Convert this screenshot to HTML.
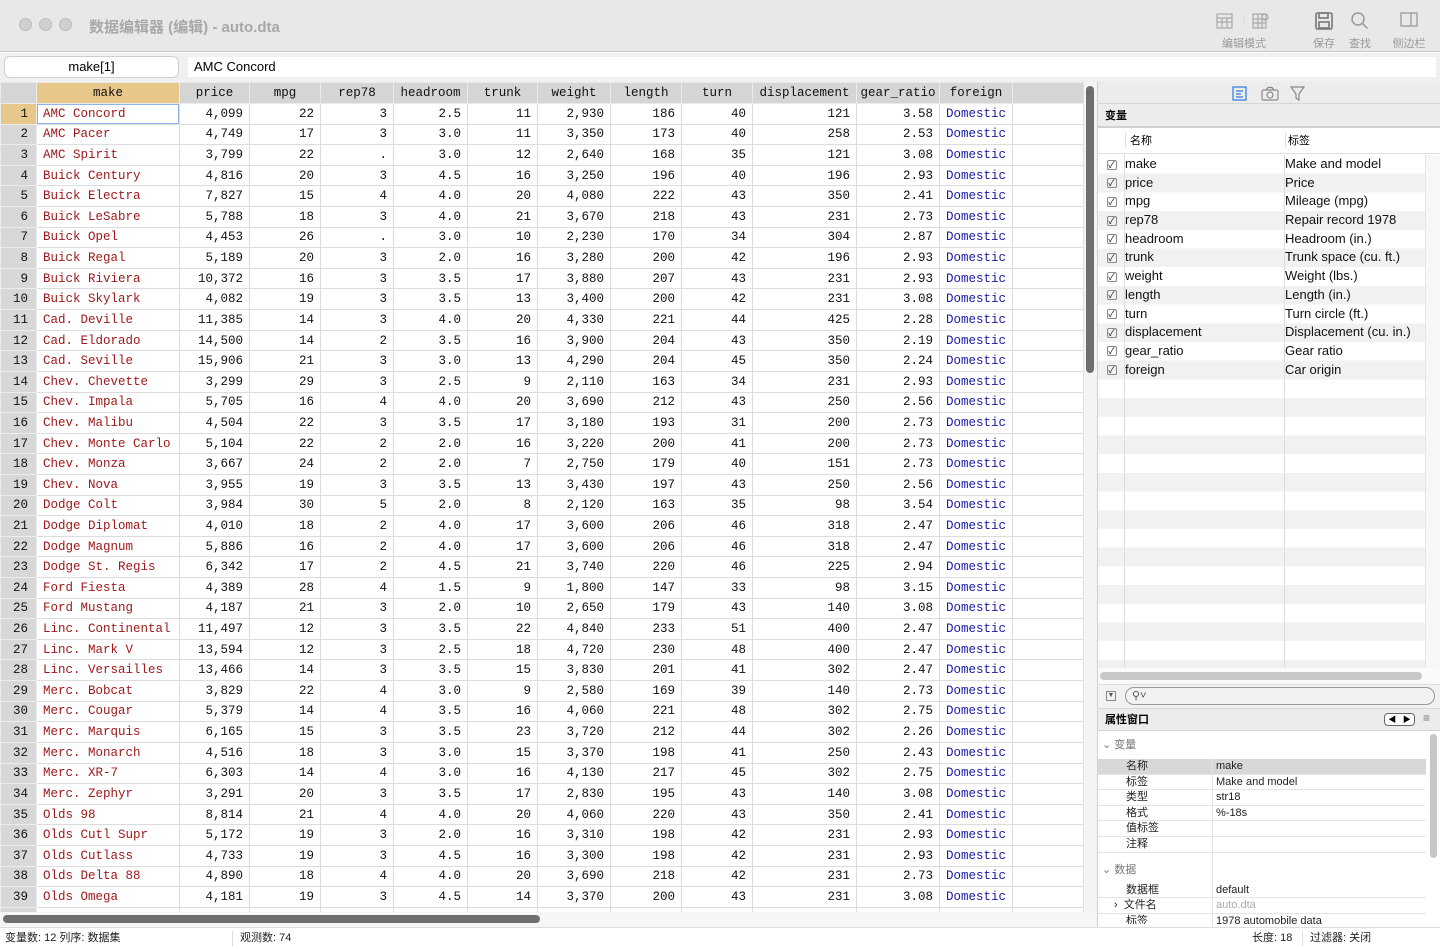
<!DOCTYPE html>
<html><head><meta charset="utf-8"><style>
*{margin:0;padding:0;box-sizing:border-box}
body{width:1440px;height:949px;overflow:hidden;background:#fff;font-family:"Liberation Sans","Noto Sans CJK SC",sans-serif;position:relative}
.abs{position:absolute}
#title{left:0;top:0;width:1440px;height:52px;background:#e8e8e8;border-bottom:1px solid #c8c8c8}
.dot{width:13px;height:13px;border-radius:50%;background:#d0d0d0;border:1px solid #bdbdbd;top:18px}
.tb{font-size:11px;color:#9a9a9a;text-align:center}
#grid{left:0;top:82px;width:1083px;height:830px;overflow:hidden}
table{border-collapse:collapse;table-layout:fixed;width:1083px;font-family:"Liberation Mono",monospace;font-size:12.5px}
td,th{height:20.62px;border:1px solid #dcdcdc;padding:0 6px;white-space:nowrap;overflow:hidden;text-align:right;color:#111}
th{background:#d5d5d5;font-weight:normal;text-align:center;border-color:#eaeaea;height:21px;padding:0 2px}
td:first-child{background:#d8d8d8;border-color:#ececec;text-align:right;padding-right:8px}
td:nth-child(2){text-align:left;color:#a0191a}
td:nth-child(13){text-align:left;color:#1a1aa8}
.vr{font-size:13px;color:#111;height:18.7px;line-height:18.7px}
.cb{display:inline-block;width:27px;text-align:center}
.cb i{display:inline-block;width:10px;height:10px;border:1px solid #888;border-radius:2px;font-style:normal;font-size:9px;line-height:9px;vertical-align:middle}
.nm{display:inline-block;width:160px}
</style></head><body>
<div id="title" class="abs">
<div class="abs dot" style="left:19px"></div><div class="abs dot" style="left:39px"></div><div class="abs dot" style="left:59px"></div>
<div class="abs" style="left:89px;top:16px;font-size:15px;font-weight:bold;color:#a8a8a8">数据编辑器 (编辑) - auto.dta</div>
<svg class="abs" style="left:1216px;top:12px" width="56" height="20" viewBox="0 0 56 20" fill="none" stroke="#aaa" stroke-width="1.2"><rect x="1" y="2" width="15" height="14"/><path d="M1 6h15M1 10h15M6 6v10M11 6v10"/><line x1="28" y1="2" x2="28" y2="14" stroke="#ddd"/><rect x="37" y="2" width="13" height="14"/><path d="M37 7h13M37 11h13M42 2v14M46 2v14"/><circle cx="49" cy="5" r="3"/></svg>
<div class="abs tb" style="left:1216px;top:35px;width:56px">编辑模式</div>
<svg class="abs" style="left:1314px;top:11px" width="20" height="20" viewBox="0 0 20 20" fill="none" stroke="#777" stroke-width="1.6"><rect x="2" y="2" width="16" height="16" rx="1.5"/><rect x="5" y="2" width="9" height="5"/><rect x="5" y="11" width="10" height="6"/></svg>
<div class="abs tb" style="left:1306px;top:35px;width:36px">保存</div>
<svg class="abs" style="left:1350px;top:11px" width="20" height="20" viewBox="0 0 20 20" fill="none" stroke="#999" stroke-width="1.5"><circle cx="8" cy="8" r="6"/><path d="M12.5 12.5l5 5"/></svg>
<div class="abs tb" style="left:1342px;top:35px;width:36px">查找</div>
<svg class="abs" style="left:1400px;top:12px" width="18" height="16" viewBox="0 0 18 16" fill="none" stroke="#999" stroke-width="1.3"><rect x="1" y="1" width="16" height="13"/><path d="M11 1v13"/></svg>
<div class="abs tb" style="left:1390px;top:35px;width:38px">侧边栏</div>
</div>
<div class="abs" style="left:0;top:53px;width:1440px;height:29px;background:#f0f0f0"></div>
<div class="abs" style="left:5px;top:57px;width:173px;height:20px;background:#fff;border-radius:5px;box-shadow:0 0 0 1px #d0d0d0;font-size:13px;text-align:center;line-height:20px">make[1]</div>
<div class="abs" style="left:188px;top:57px;width:1248px;height:20px;background:#fff;font-size:13px;line-height:20px;padding-left:6px">AMC Concord</div>
<div id="grid" class="abs"><table>
<colgroup><col style="width:36px"><col style="width:143px"><col style="width:70px"><col style="width:71px"><col style="width:73px"><col style="width:74px"><col style="width:70px"><col style="width:73px"><col style="width:71px"><col style="width:71px"><col style="width:104px"><col style="width:83px"><col style="width:73px"><col style="width:71px"></colgroup>
<tr><th style="background:#d5d5d5"></th><th style="background:#e8c88a">make</th><th>price</th><th>mpg</th><th>rep78</th><th>headroom</th><th>trunk</th><th>weight</th><th>length</th><th>turn</th><th>displacement</th><th>gear_ratio</th><th>foreign</th><th style="background:#d5d5d5"></th></tr>
<tr><td style="background:#e8c88a">1</td><td style="box-shadow:inset 0 0 0 1px #8fb5e8">AMC Concord</td><td>4,099</td><td>22</td><td>3</td><td>2.5</td><td>11</td><td>2,930</td><td>186</td><td>40</td><td>121</td><td>3.58</td><td>Domestic</td><td></td></tr>
<tr><td>2</td><td>AMC Pacer</td><td>4,749</td><td>17</td><td>3</td><td>3.0</td><td>11</td><td>3,350</td><td>173</td><td>40</td><td>258</td><td>2.53</td><td>Domestic</td><td></td></tr>
<tr><td>3</td><td>AMC Spirit</td><td>3,799</td><td>22</td><td>.</td><td>3.0</td><td>12</td><td>2,640</td><td>168</td><td>35</td><td>121</td><td>3.08</td><td>Domestic</td><td></td></tr>
<tr><td>4</td><td>Buick Century</td><td>4,816</td><td>20</td><td>3</td><td>4.5</td><td>16</td><td>3,250</td><td>196</td><td>40</td><td>196</td><td>2.93</td><td>Domestic</td><td></td></tr>
<tr><td>5</td><td>Buick Electra</td><td>7,827</td><td>15</td><td>4</td><td>4.0</td><td>20</td><td>4,080</td><td>222</td><td>43</td><td>350</td><td>2.41</td><td>Domestic</td><td></td></tr>
<tr><td>6</td><td>Buick LeSabre</td><td>5,788</td><td>18</td><td>3</td><td>4.0</td><td>21</td><td>3,670</td><td>218</td><td>43</td><td>231</td><td>2.73</td><td>Domestic</td><td></td></tr>
<tr><td>7</td><td>Buick Opel</td><td>4,453</td><td>26</td><td>.</td><td>3.0</td><td>10</td><td>2,230</td><td>170</td><td>34</td><td>304</td><td>2.87</td><td>Domestic</td><td></td></tr>
<tr><td>8</td><td>Buick Regal</td><td>5,189</td><td>20</td><td>3</td><td>2.0</td><td>16</td><td>3,280</td><td>200</td><td>42</td><td>196</td><td>2.93</td><td>Domestic</td><td></td></tr>
<tr><td>9</td><td>Buick Riviera</td><td>10,372</td><td>16</td><td>3</td><td>3.5</td><td>17</td><td>3,880</td><td>207</td><td>43</td><td>231</td><td>2.93</td><td>Domestic</td><td></td></tr>
<tr><td>10</td><td>Buick Skylark</td><td>4,082</td><td>19</td><td>3</td><td>3.5</td><td>13</td><td>3,400</td><td>200</td><td>42</td><td>231</td><td>3.08</td><td>Domestic</td><td></td></tr>
<tr><td>11</td><td>Cad. Deville</td><td>11,385</td><td>14</td><td>3</td><td>4.0</td><td>20</td><td>4,330</td><td>221</td><td>44</td><td>425</td><td>2.28</td><td>Domestic</td><td></td></tr>
<tr><td>12</td><td>Cad. Eldorado</td><td>14,500</td><td>14</td><td>2</td><td>3.5</td><td>16</td><td>3,900</td><td>204</td><td>43</td><td>350</td><td>2.19</td><td>Domestic</td><td></td></tr>
<tr><td>13</td><td>Cad. Seville</td><td>15,906</td><td>21</td><td>3</td><td>3.0</td><td>13</td><td>4,290</td><td>204</td><td>45</td><td>350</td><td>2.24</td><td>Domestic</td><td></td></tr>
<tr><td>14</td><td>Chev. Chevette</td><td>3,299</td><td>29</td><td>3</td><td>2.5</td><td>9</td><td>2,110</td><td>163</td><td>34</td><td>231</td><td>2.93</td><td>Domestic</td><td></td></tr>
<tr><td>15</td><td>Chev. Impala</td><td>5,705</td><td>16</td><td>4</td><td>4.0</td><td>20</td><td>3,690</td><td>212</td><td>43</td><td>250</td><td>2.56</td><td>Domestic</td><td></td></tr>
<tr><td>16</td><td>Chev. Malibu</td><td>4,504</td><td>22</td><td>3</td><td>3.5</td><td>17</td><td>3,180</td><td>193</td><td>31</td><td>200</td><td>2.73</td><td>Domestic</td><td></td></tr>
<tr><td>17</td><td>Chev. Monte Carlo</td><td>5,104</td><td>22</td><td>2</td><td>2.0</td><td>16</td><td>3,220</td><td>200</td><td>41</td><td>200</td><td>2.73</td><td>Domestic</td><td></td></tr>
<tr><td>18</td><td>Chev. Monza</td><td>3,667</td><td>24</td><td>2</td><td>2.0</td><td>7</td><td>2,750</td><td>179</td><td>40</td><td>151</td><td>2.73</td><td>Domestic</td><td></td></tr>
<tr><td>19</td><td>Chev. Nova</td><td>3,955</td><td>19</td><td>3</td><td>3.5</td><td>13</td><td>3,430</td><td>197</td><td>43</td><td>250</td><td>2.56</td><td>Domestic</td><td></td></tr>
<tr><td>20</td><td>Dodge Colt</td><td>3,984</td><td>30</td><td>5</td><td>2.0</td><td>8</td><td>2,120</td><td>163</td><td>35</td><td>98</td><td>3.54</td><td>Domestic</td><td></td></tr>
<tr><td>21</td><td>Dodge Diplomat</td><td>4,010</td><td>18</td><td>2</td><td>4.0</td><td>17</td><td>3,600</td><td>206</td><td>46</td><td>318</td><td>2.47</td><td>Domestic</td><td></td></tr>
<tr><td>22</td><td>Dodge Magnum</td><td>5,886</td><td>16</td><td>2</td><td>4.0</td><td>17</td><td>3,600</td><td>206</td><td>46</td><td>318</td><td>2.47</td><td>Domestic</td><td></td></tr>
<tr><td>23</td><td>Dodge St. Regis</td><td>6,342</td><td>17</td><td>2</td><td>4.5</td><td>21</td><td>3,740</td><td>220</td><td>46</td><td>225</td><td>2.94</td><td>Domestic</td><td></td></tr>
<tr><td>24</td><td>Ford Fiesta</td><td>4,389</td><td>28</td><td>4</td><td>1.5</td><td>9</td><td>1,800</td><td>147</td><td>33</td><td>98</td><td>3.15</td><td>Domestic</td><td></td></tr>
<tr><td>25</td><td>Ford Mustang</td><td>4,187</td><td>21</td><td>3</td><td>2.0</td><td>10</td><td>2,650</td><td>179</td><td>43</td><td>140</td><td>3.08</td><td>Domestic</td><td></td></tr>
<tr><td>26</td><td>Linc. Continental</td><td>11,497</td><td>12</td><td>3</td><td>3.5</td><td>22</td><td>4,840</td><td>233</td><td>51</td><td>400</td><td>2.47</td><td>Domestic</td><td></td></tr>
<tr><td>27</td><td>Linc. Mark V</td><td>13,594</td><td>12</td><td>3</td><td>2.5</td><td>18</td><td>4,720</td><td>230</td><td>48</td><td>400</td><td>2.47</td><td>Domestic</td><td></td></tr>
<tr><td>28</td><td>Linc. Versailles</td><td>13,466</td><td>14</td><td>3</td><td>3.5</td><td>15</td><td>3,830</td><td>201</td><td>41</td><td>302</td><td>2.47</td><td>Domestic</td><td></td></tr>
<tr><td>29</td><td>Merc. Bobcat</td><td>3,829</td><td>22</td><td>4</td><td>3.0</td><td>9</td><td>2,580</td><td>169</td><td>39</td><td>140</td><td>2.73</td><td>Domestic</td><td></td></tr>
<tr><td>30</td><td>Merc. Cougar</td><td>5,379</td><td>14</td><td>4</td><td>3.5</td><td>16</td><td>4,060</td><td>221</td><td>48</td><td>302</td><td>2.75</td><td>Domestic</td><td></td></tr>
<tr><td>31</td><td>Merc. Marquis</td><td>6,165</td><td>15</td><td>3</td><td>3.5</td><td>23</td><td>3,720</td><td>212</td><td>44</td><td>302</td><td>2.26</td><td>Domestic</td><td></td></tr>
<tr><td>32</td><td>Merc. Monarch</td><td>4,516</td><td>18</td><td>3</td><td>3.0</td><td>15</td><td>3,370</td><td>198</td><td>41</td><td>250</td><td>2.43</td><td>Domestic</td><td></td></tr>
<tr><td>33</td><td>Merc. XR-7</td><td>6,303</td><td>14</td><td>4</td><td>3.0</td><td>16</td><td>4,130</td><td>217</td><td>45</td><td>302</td><td>2.75</td><td>Domestic</td><td></td></tr>
<tr><td>34</td><td>Merc. Zephyr</td><td>3,291</td><td>20</td><td>3</td><td>3.5</td><td>17</td><td>2,830</td><td>195</td><td>43</td><td>140</td><td>3.08</td><td>Domestic</td><td></td></tr>
<tr><td>35</td><td>Olds 98</td><td>8,814</td><td>21</td><td>4</td><td>4.0</td><td>20</td><td>4,060</td><td>220</td><td>43</td><td>350</td><td>2.41</td><td>Domestic</td><td></td></tr>
<tr><td>36</td><td>Olds Cutl Supr</td><td>5,172</td><td>19</td><td>3</td><td>2.0</td><td>16</td><td>3,310</td><td>198</td><td>42</td><td>231</td><td>2.93</td><td>Domestic</td><td></td></tr>
<tr><td>37</td><td>Olds Cutlass</td><td>4,733</td><td>19</td><td>3</td><td>4.5</td><td>16</td><td>3,300</td><td>198</td><td>42</td><td>231</td><td>2.93</td><td>Domestic</td><td></td></tr>
<tr><td>38</td><td>Olds Delta 88</td><td>4,890</td><td>18</td><td>4</td><td>4.0</td><td>20</td><td>3,690</td><td>218</td><td>42</td><td>231</td><td>2.73</td><td>Domestic</td><td></td></tr>
<tr><td>39</td><td>Olds Omega</td><td>4,181</td><td>19</td><td>3</td><td>4.5</td><td>14</td><td>3,370</td><td>200</td><td>43</td><td>231</td><td>3.08</td><td>Domestic</td><td></td></tr>
<tr><td></td><td></td><td></td><td></td><td></td><td></td><td></td><td></td><td></td><td></td><td></td><td></td><td></td><td></td></tr>
</table></div>
<div class="abs" style="left:1083px;top:82px;width:14px;height:830px;background:#f4f4f4;border-left:1px solid #e0e0e0"></div>
<div class="abs" style="left:1086px;top:86px;width:8px;height:287px;background:#6e6e6e;border-radius:4px"></div>
<div class="abs" style="left:0;top:912px;width:1097px;height:15px;background:#f6f6f6"></div>
<div class="abs" style="left:3px;top:915px;width:537px;height:8px;background:#707070;border-radius:4px"></div>
<div class="abs" style="left:0;top:927px;width:1440px;height:22px;background:#fff;border-top:1px solid #ddd;font-size:11px;color:#222;line-height:21px">
<span class="abs" style="left:5px">变量数: 12 列序: 数据集</span>
<span class="abs" style="left:232px;top:3px;height:15px;border-left:1px solid #ddd"></span>
<span class="abs" style="left:240px">观测数: 74</span>
<span class="abs" style="left:1252px">长度: 18</span>
<span class="abs" style="left:1302px;top:3px;height:15px;border-left:1px solid #ddd"></span>
<span class="abs" style="left:1310px">过滤器: 关闭</span>
</div>
<div class="abs" style="left:1097px;top:82px;width:343px;height:845px;background:#fff;border-left:1px solid #cfcfcf"></div>
<div class="abs" style="left:1098px;top:82px;width:342px;height:22px;background:#ececec;border-bottom:1px solid #d6d6d6"></div>
<svg class="abs" style="left:1232px;top:86px" width="80" height="16" viewBox="0 0 80 16" fill="none" stroke-width="1.2"><rect x="1" y="1" width="13" height="13" stroke="#2a7ae2"/><path d="M4 5h7M4 8h5M4 11h7" stroke="#2a7ae2"/><rect x="30" y="4" width="16" height="10" rx="1.5" stroke="#888"/><path d="M34 4l2-2.5h4L42 4" stroke="#888"/><circle cx="38" cy="9" r="3" stroke="#888"/><path d="M59 1h13l-5 7v6l-3-2v-4z" stroke="#888"/></svg>
<div class="abs" style="left:1098px;top:104px;width:342px;height:24px;background:#ececec;border-bottom:2px solid #d0d0d0;font-size:11px;font-weight:bold;line-height:24px;padding-left:7px">变量</div>
<div class="abs" style="left:1098px;top:128px;width:342px;height:26px;border-bottom:1px solid #e0e0e0;font-size:11px;line-height:26px">
<span class="abs" style="left:27px;top:5px;height:15px;border-left:1px solid #ddd"></span><span class="abs" style="left:32px">名称</span>
<span class="abs" style="left:187px;top:5px;height:15px;border-left:1px solid #ddd"></span><span class="abs" style="left:190px">标签</span></div>
<div class="abs" style="left:1098px;top:155px;width:327px;height:513px;background:repeating-linear-gradient(#fff 0 18.7px,#f0f1f1 18.7px 37.4px)"></div>
<div class="abs" style="left:1124px;top:155px;height:513px;border-left:1px solid #ddd"></div>
<div class="abs" style="left:1284px;top:155px;height:513px;border-left:1px solid #ddd"></div>
<div class="abs" style="left:1425px;top:155px;width:15px;height:513px;background:#f7f7f7;border-left:1px solid #e6e6e6"></div>
<div class="abs" style="left:1098px;top:155px;width:327px">
<div class="vr"><span class="cb"><i>✓</i></span><span class="nm">make</span>Make and model</div>
<div class="vr"><span class="cb"><i>✓</i></span><span class="nm">price</span>Price</div>
<div class="vr"><span class="cb"><i>✓</i></span><span class="nm">mpg</span>Mileage (mpg)</div>
<div class="vr"><span class="cb"><i>✓</i></span><span class="nm">rep78</span>Repair record 1978</div>
<div class="vr"><span class="cb"><i>✓</i></span><span class="nm">headroom</span>Headroom (in.)</div>
<div class="vr"><span class="cb"><i>✓</i></span><span class="nm">trunk</span>Trunk space (cu. ft.)</div>
<div class="vr"><span class="cb"><i>✓</i></span><span class="nm">weight</span>Weight (lbs.)</div>
<div class="vr"><span class="cb"><i>✓</i></span><span class="nm">length</span>Length (in.)</div>
<div class="vr"><span class="cb"><i>✓</i></span><span class="nm">turn</span>Turn circle (ft.)</div>
<div class="vr"><span class="cb"><i>✓</i></span><span class="nm">displacement</span>Displacement (cu. in.)</div>
<div class="vr"><span class="cb"><i>✓</i></span><span class="nm">gear_ratio</span>Gear ratio</div>
<div class="vr"><span class="cb"><i>✓</i></span><span class="nm">foreign</span>Car origin</div>
</div>
<div class="abs" style="left:1098px;top:668px;width:342px;height:16px;background:#fafafa"></div>
<div class="abs" style="left:1100px;top:672px;width:322px;height:8px;background:#c8c8c8;border-radius:4px"></div>
<div class="abs" style="left:1098px;top:684px;width:342px;height:24px;background:#f2f2f2;border-top:1px solid #ddd"></div>
<div class="abs" style="left:1106px;top:691px;width:10px;height:10px;border:1px solid #888;font-size:7px;line-height:8px;text-align:center;color:#555">▼</div>
<div class="abs" style="left:1125px;top:687px;width:310px;height:18px;border:1px solid #999;border-radius:9px;font-size:11px;padding-left:6px;line-height:16px;color:#555">⚲˅</div>
<div class="abs" style="left:1098px;top:708px;width:342px;height:23px;background:#ececec;border-top:1px solid #d6d6d6;border-bottom:1px solid #d6d6d6;font-size:11px;font-weight:bold;line-height:22px;padding-left:7px">属性窗口</div>
<div class="abs" style="left:1384px;top:713px;width:31px;height:13px;border:1px solid #666;border-radius:4px;font-size:8px;line-height:11px;background:#fff;display:flex;justify-content:space-around">◀<span>▶</span></div>
<div class="abs" style="left:1423px;top:711px;font-size:12px;color:#777">≡</div>
<div class="abs" style="left:1430px;top:734px;width:7px;height:124px;background:#c6c6c6;border-radius:4px"></div>
<div class="abs" style="left:1098px;top:735px;width:328px;font-size:11px;color:#222">
<div style="height:24px;line-height:20px;padding-left:4px;color:#777">⌄ 变量</div>
<div style="height:15.6px;line-height:15px;background:#d8d8d8;border-bottom:1px solid #e4e4e4;position:relative"><span class="abs" style="left:28px">名称</span><span class="abs" style="left:118px">make</span></div>
<div style="height:15.6px;line-height:15px;border-bottom:1px solid #e4e4e4;position:relative"><span class="abs" style="left:28px">标签</span><span class="abs" style="left:118px">Make and model</span></div>
<div style="height:15.6px;line-height:15px;border-bottom:1px solid #e4e4e4;position:relative"><span class="abs" style="left:28px">类型</span><span class="abs" style="left:118px">str18</span></div>
<div style="height:15.6px;line-height:15px;border-bottom:1px solid #e4e4e4;position:relative"><span class="abs" style="left:28px">格式</span><span class="abs" style="left:118px">%-18s</span></div>
<div style="height:15.6px;line-height:15px;border-bottom:1px solid #e4e4e4;position:relative"><span class="abs" style="left:28px">值标签</span></div>
<div style="height:15.6px;line-height:15px;border-bottom:1px solid #e4e4e4;position:relative"><span class="abs" style="left:28px">注释</span></div>
<div style="height:30px;line-height:34px;padding-left:4px;color:#777">⌄ 数据</div>
<div style="height:15.6px;line-height:15px;border-bottom:1px solid #e4e4e4;position:relative"><span class="abs" style="left:28px">数据框</span><span class="abs" style="left:118px">default</span></div>
<div style="height:15.6px;line-height:15px;border-bottom:1px solid #e4e4e4;position:relative"><span class="abs" style="left:16px">›&nbsp; 文件名</span><span class="abs" style="left:118px;color:#aaa">auto.dta</span></div>
<div style="height:10px;line-height:15px;overflow:hidden;position:relative"><span class="abs" style="left:28px">标签</span><span class="abs" style="left:118px">1978 automobile data</span></div>
</div>
<div class="abs" style="left:1212px;top:759px;height:168px;border-left:1px solid #e4e4e4"></div>
</body></html>
